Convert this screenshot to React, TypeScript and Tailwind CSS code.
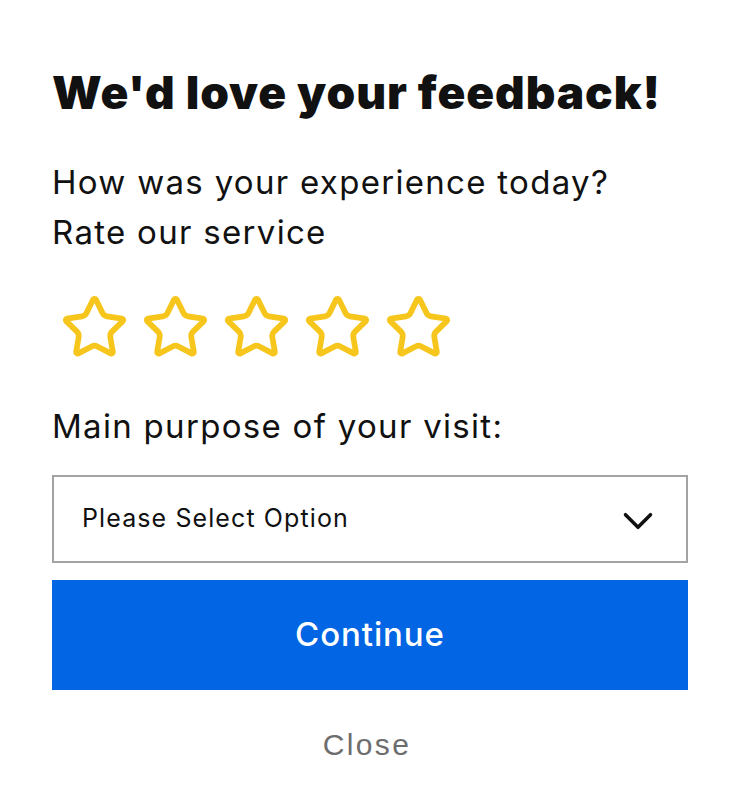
import React, { useState } from 'react';
import { Star, ChevronDown } from 'lucide-react';

const App: React.FC = () => {
  const [rating, setRating] = useState(0);

  return (
    <div className="min-h-screen bg-white font-['Inter',sans-serif] text-[#111]">
      <div className="w-[636px] ml-[52px] pt-[62px]">
        {/* Title */}
        <h1 className="text-[46px] font-black leading-[60px] tracking-[0.9px]">We'd love your feedback!</h1>

        {/* Intro */}
        <p className="mt-[35px] text-[33px] leading-[50px] tracking-[1.3px]">How was your experience today?</p>
        <p className="text-[33px] leading-[50px] tracking-[1.3px]">Rate our service</p>

        {/* Stars */}
        <div className="mt-[36px] flex gap-[12px] ml-[8px]">
          {[1, 2, 3, 4, 5].map((n) => (
            <button key={n} onClick={() => setRating(n)} className="p-0">
              <Star
                size={69}
                strokeWidth={2}
                className="text-[#f6c61c]"
                fill={n <= rating ? '#f6c61c' : 'none'}
              />
            </button>
          ))}
        </div>

        {/* Purpose */}
        <p className="mt-[39px] text-[33px] leading-[50px] tracking-[1.3px]">Main purpose of your visit:</p>

        <div className="mt-[24px] h-[88px] border-2 border-[#a3a3a3] flex items-center justify-between pl-[28px] pr-[23px]">
          <span className="text-[25px] tracking-[1.1px]">Please Select Option</span>
          <ChevronDown size={50} strokeWidth={1.7} className="mt-[4px] text-[#111]" />
        </div>

        {/* Continue */}
        <button className="mt-[17px] w-full h-[110px] bg-[#0265e3] text-white text-[33px] font-medium tracking-[0.9px]">
          Continue
        </button>

        {/* Close */}
        <div className="mt-[32px] text-center pr-[6px]">
          <button className="font-['Liberation_Sans',Arial,sans-serif] text-[30px] tracking-[2.4px] text-[#6d6d6d]">
            Close
          </button>
        </div>
      </div>
    </div>
  );
};

export default App;
